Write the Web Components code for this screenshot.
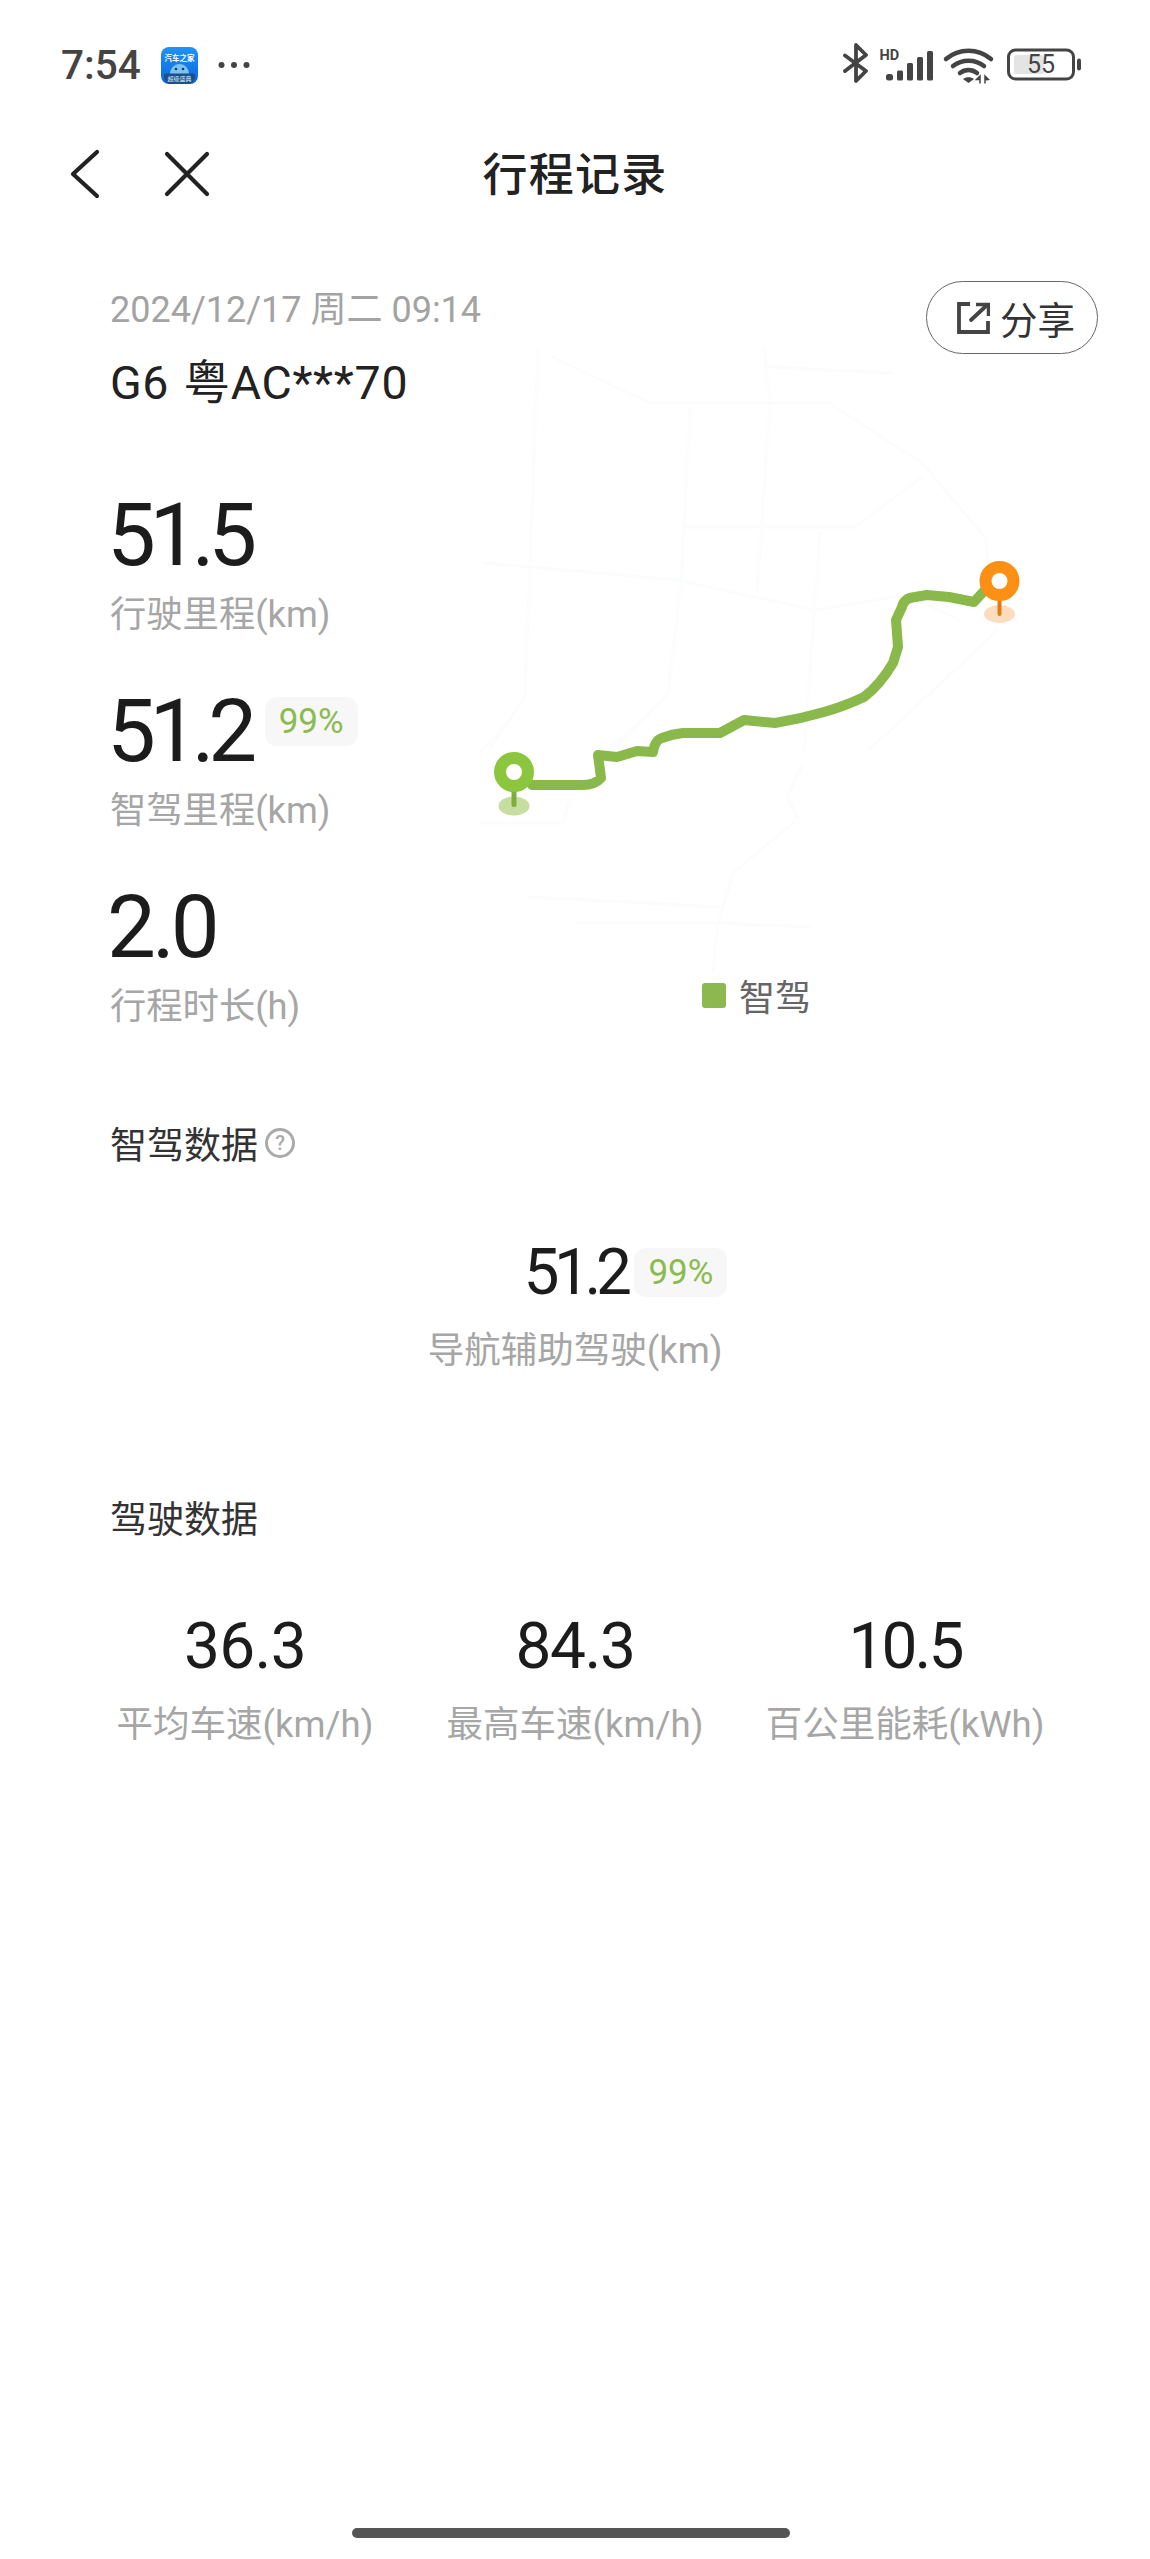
<!DOCTYPE html>
<html lang="zh">
<head>
<meta charset="utf-8">
<title>行程记录</title>
<style>
  html, body { margin: 0; background: #fff; }
  body {
    width: 1150px;
    min-height: 2559px;
    display: flex;
    flex-direction: column;
    font-family: Roboto, "Noto Sans CJK SC", sans-serif;
  }
</style>
</head>
<body>
  <status-bar></status-bar>
  <nav-bar>行程记录</nav-bar>
  <trip-summary>
    <span slot="date">2024/12/17 周二 09:14</span>
    <span slot="car">G6 粤AC***70</span>
    <stat-block label="行驶里程(km)">51.5</stat-block>
    <stat-block label="智驾里程(km)">51.2<percent-badge slot="badge">99%</percent-badge></stat-block>
    <stat-block label="行程时长(h)" style="--value-spacing:-4px">2.0</stat-block>
  </trip-summary>

  <section-title help>智驾数据</section-title>
  <metric-grid columns="1">
    <metric-cell label="导航辅助驾驶(km)" style="--value-spacing:-5.500px">51.2<percent-badge slot="badge">99%</percent-badge></metric-cell>
  </metric-grid>

  <section-title class="driving">驾驶数据</section-title>
  <metric-grid columns="3">
    <metric-cell label="平均车速(km/h)" style="--value-spacing:-.7px">36.3</metric-cell>
    <metric-cell label="最高车速(km/h)" style="--value-spacing:-1.500px">84.3</metric-cell>
    <metric-cell label="百公里能耗(kWh)" style="--value-spacing:-3px">10.5</metric-cell>
  </metric-grid>

  <home-indicator></home-indicator>

<script>
class StatusBar extends HTMLElement {
  constructor() {
    super();
    this.attachShadow({ mode: 'open' });
  }

  connectedCallback() {
    this.shadowRoot.innerHTML = `
      <style>
        :host {
          display: flex;
          align-items: center;
          height: 130px;
          box-sizing: border-box;
          padding: 0 69px 0 61px;
          color: #444;
        }
        .time {
          font: 500 40.500px/1 Roboto, sans-serif;
        }
        .app { margin-left: 20px; display: block; }
        .more { margin-left: 20px; display: block; }
        .right {
          margin-left: auto;
          display: flex;
          align-items: center;
        }
        svg { display: block; }
        text { font-family: Roboto, "Noto Sans CJK SC", sans-serif; }
      </style>
      <span class="time">7:54</span>
      <svg class="app" width="37" height="37" viewBox="0 0 37 37">
        <defs>
          <linearGradient id="appbg" x1="0" y1="0" x2="0" y2="1">
            <stop offset="0" stop-color="#1f93f5"/>
            <stop offset="1" stop-color="#0c66dc"/>
          </linearGradient>
        </defs>
        <rect width="37" height="37" rx="8" fill="url(#appbg)"/>
        <text x="18.5" y="14" text-anchor="middle" font-size="7.5" font-weight="700" fill="#fff">汽车之家</text>
        <path d="M9 28c0-7 4-11 9.500-11s9.500 4 9.500 11z" fill="#7cc3f2"/>
        <circle cx="15" cy="22" r="1.300" fill="#123d78"/>
        <circle cx="22" cy="22" r="1.300" fill="#123d78"/>
        <path d="M3 28.500c0-1 1-2 2-2h27c1 0 2 1 2 2v.5c0 4.500-3 8-8 8H11c-5 0-8-3.500-8-8z" fill="#1d4f86"/>
        <text x="18.500" y="33.500" text-anchor="middle" font-size="6" fill="#cfe6fa">超级盛典</text>
      </svg>
      <svg class="more" width="32" height="8" viewBox="0 0 32 8" fill="#444">
        <circle cx="3.500" cy="4" r="3"/><circle cx="16" cy="4" r="3"/><circle cx="28.500" cy="4" r="3"/>
      </svg>
      <div class="right">
        <svg width="238" height="46" viewBox="0 0 238 46">
          <!-- bluetooth -->
          <path d="M2 13.500 23 29 13 39V3l10 10L2 29" fill="none" stroke="#444" stroke-width="3.800" stroke-linejoin="round" stroke-linecap="round"/>
          <!-- HD + signal -->
          <text x="36.500" y="18" font-size="14.500" font-weight="700" fill="#444">HD</text>
          <g fill="#444">
            <rect x="43" y="32" width="7" height="6.500" rx="2.500"/>
            <rect x="54" y="28.500" width="6" height="10" rx="1.500"/>
            <rect x="64" y="21" width="6" height="17.500" rx="1.500"/>
            <rect x="74" y="15" width="6" height="23.500" rx="1.500"/>
            <rect x="84" y="9" width="6" height="29.500" rx="1.500"/>
          </g>
          <!-- wifi -->
          <g fill="none" stroke="#444" stroke-width="4.500" stroke-linecap="round">
            <path d="M103 17c13-11 32-11 45 0"/>
            <path d="M110 24c9-7 22-7 31 0"/>
            <path d="M117 31c5-4 12-4 17 0"/>
          </g>
          <path d="M120 37c3-2.500 8-2.500 11 0l-5.500 4z" fill="#444"/>
          <path d="M137 34l-3.500 3.500H137zM137 38v3.500M142 41.500V38M142 38V34l3.500 3.500z" fill="#444" stroke="#444" stroke-width="1.500"/>
          <!-- battery -->
          <rect x="165.500" y="8" width="65" height="29" rx="7" fill="#fff" stroke="#444" stroke-width="3"/>
          <rect x="171" y="13" width="30" height="19" rx="2" fill="#e4e4e4"/>
          <rect x="234" y="16.500" width="4" height="12" rx="2" fill="#444"/>
          <text x="198" y="31" text-anchor="middle" font-size="25" fill="#444">55</text>
        </svg>
      </div>
    `;
  }
}

class NavBar extends HTMLElement {
  constructor() {
    super();
    this.attachShadow({ mode: 'open' });
  }

  connectedCallback() {
    this.shadowRoot.innerHTML = `
      <style>
        :host {
          display: grid;
          grid-template-columns: 1fr auto 1fr;
          align-items: center;
          height: 88px;
          padding: 0 68px;
          box-sizing: border-box;
          color: #222;
        }
        .actions { display: flex; align-items: center; gap: 62px; }
        svg { display: block; }
        .title {
          font: 500 45px/1 "Noto Sans CJK SC", sans-serif;
          letter-spacing: 1.200px;
          margin-top: -5px;
        }
      </style>
      <div class="actions">
        <svg width="34" height="50" viewBox="0 0 34 50" fill="none" stroke="#222" stroke-width="4.200" stroke-linecap="round" stroke-linejoin="round">
          <path d="M29 3 5 25l24 22"/>
        </svg>
        <svg width="46" height="46" viewBox="0 0 46 46" fill="none" stroke="#222" stroke-width="4.200" stroke-linecap="round">
          <path d="M3 3l40 40M43 3 3 43"/>
        </svg>
      </div>
      <div class="title"><slot></slot></div>
      <div></div>
    `;
  }
}

class PercentBadge extends HTMLElement {
  constructor() {
    super();
    this.attachShadow({ mode: 'open' });
  }

  connectedCallback() {
    this.shadowRoot.innerHTML = `
      <style>
        :host {
          display: inline-flex;
          align-items: center;
          height: 49px;
          padding: 0 14px;
          border-radius: 12px;
          background: #f6f7f6;
          color: #8bbb50;
          font: 400 35px/1 Roboto, sans-serif;
          letter-spacing: 0;
        }
      </style>
      <slot></slot>
    `;
  }
}

class StatBlock extends HTMLElement {
  constructor() {
    super();
    this.attachShadow({ mode: 'open' });
  }

  connectedCallback() {
    const label = this.getAttribute('label') || '';
    this.shadowRoot.innerHTML = `
      <style>
        :host { display: block; }
        .row { display: flex; align-items: center; height: 100px; margin-left: -3px; }
        .value {
          font: 400 87px/100px Roboto, sans-serif;
          letter-spacing: var(--value-spacing, -6.500px);
          color: #1c1c1c;
          margin-top: -2px;
        }
        ::slotted([slot="badge"]) { margin: -22px 0 0 14px; }
        .label {
          font: 400 36.300px/58px Roboto, "Noto Sans CJK SC", sans-serif;
          color: #a6a6a6;
          white-space: nowrap;
        }
      </style>
      <div class="row">
        <span class="value"><slot></slot></span>
        <slot name="badge"></slot>
      </div>
      <div class="label">${label}</div>
    `;
  }
}

class TripMap extends HTMLElement {
  constructor() {
    super();
    this.attachShadow({ mode: 'open' });
  }

  connectedCallback() {
    this.shadowRoot.innerHTML = `
      <style>
        :host { display: block; }
        svg { display: block; overflow: visible; }
      </style>
      <svg width="614" height="600" viewBox="484 354 614 600">
        <g fill="none" stroke="#fbfcfc" stroke-width="3" stroke-linejoin="round" stroke-linecap="round">
          <path d="M538 350 525 697 489 750"/>
          <path d="M552 357 650 403H829L922 463 985 537 989 567"/>
          <path d="M690 410 681 583 668 693 614 750"/>
          <path d="M764 347 770 403 757 593"/>
          <path d="M770 367 891 373"/>
          <path d="M922 477 855 527H686"/>
          <path d="M485 563 677 580 815 610 905 595 960 620"/>
          <path d="M820 533 804 750"/>
          <path d="M998 630 869 750"/>
          <path d="M793 823 733 873 717 927 713 973"/>
          <path d="M577 923H717L810 927"/>
          <path d="M480 823H563L570 800"/>
          <path d="M530 897 720 907"/>
          <path d="M643 720 603 753"/>
          <path d="M510 720 480 753"/>
          <path d="M803 763 787 797 797 817"/>
        </g>
        <path d="M532 785H582Q595 785 601 778L598 755 617 757 637 751 653 752Q655 740 662 738 672 734 683 733H720L744 720 775 723Q800 719 824 712 845 706 864 697 880 685 893 663L898 647 896 620 902 607Q904 598 915 597L927 595 949 597 974 602 984 591" fill="none" stroke="#8ab84a" stroke-width="10" stroke-linejoin="round" stroke-linecap="round"/>
        <!-- start pin -->
        <ellipse cx="514" cy="806" rx="15.500" ry="9.500" fill="#c6dea0"/>
        <rect x="511.500" y="785" width="5" height="22" rx="2" fill="#7cae3a"/>
        <circle cx="514" cy="772" r="14" fill="#fff" stroke="#8cc63f" stroke-width="12"/>
        <!-- end pin -->
        <ellipse cx="999.500" cy="614" rx="15.500" ry="9" fill="#fbdcbd"/>
        <rect x="997.500" y="596" width="4" height="20" rx="2" fill="#e07c14"/>
        <circle cx="999.500" cy="581" r="14" fill="#fff" stroke="#fb9014" stroke-width="12"/>
      </svg>
    `;
  }
}

class TripSummary extends HTMLElement {
  constructor() {
    super();
    this.attachShadow({ mode: 'open' });
  }

  connectedCallback() {
    this.shadowRoot.innerHTML = `
      <style>
        :host {
          display: grid;
          grid-template-columns: 374px 1fr;
          padding: 67px 52px 0 110px;
        }
        .date {
          font: 400 36px/50px Roboto, "Noto Sans CJK SC", sans-serif;
          color: #a3a3a3;
          white-space: nowrap;
        }
        .car {
          margin-top: 23px;
          font: 400 46.500px/50px Roboto, "Noto Sans CJK SC", sans-serif;
          letter-spacing: .7px;
          word-spacing: 2px;
          color: #222;
          white-space: nowrap;
        }
        .stats {
          margin-top: 78px;
          display: flex;
          flex-direction: column;
          gap: 38px;
        }
        .side {
          display: flex;
          flex-direction: column;
          margin-top: -4px;
        }
        .share {
          align-self: flex-end;
          display: flex;
          align-items: center;
          gap: 10px;
          width: 172px;
          height: 73px;
          padding-left: 30px;
          box-sizing: border-box;
          border: 1.500px solid #666;
          border-radius: 37px;
          font: 400 37.500px/1 "Noto Sans CJK SC", sans-serif;
          color: #333;
        }
        .share svg { display: block; flex: none; }
        .share span { white-space: nowrap; }
        .legend {
          display: flex;
          align-items: center;
          gap: 13px;
          margin: 16px 0 0 218px;
          font: 400 36px/50px "Noto Sans CJK SC", sans-serif;
          color: #666;
        }
        .legend i {
          width: 24px;
          height: 25px;
          border-radius: 3px;
          background: #8cb850;
        }
      </style>
      <div>
        <div class="date"><slot name="date"></slot></div>
        <div class="car"><slot name="car"></slot></div>
        <div class="stats"><slot></slot></div>
      </div>
      <div class="side">
        <div class="share">
          <svg width="33" height="32" viewBox="0 0 33 32" fill="none" stroke="#444" stroke-width="3.800">
            <path d="M13 2H2v28h29V19"/>
            <path d="M14 18 29 4" stroke-linecap="round"/>
            <path d="M19 2.500h12.500V14" stroke-width="3.500"/>
          </svg>
          <span>分享</span>
        </div>
        <trip-map></trip-map>
        <div class="legend"><i></i><span>智驾</span></div>
      </div>
    `;
  }
}

class SectionTitle extends HTMLElement {
  constructor() {
    super();
    this.attachShadow({ mode: 'open' });
  }

  connectedCallback() {
    const help = this.hasAttribute('help');
    this.shadowRoot.innerHTML = `
      <style>
        :host {
          display: flex;
          align-items: center;
          gap: 7px;
          padding-left: 110px;
          margin-top: 82px;
          font: 400 37px/50px "Noto Sans CJK SC", sans-serif;
          color: #333;
        }
        :host(.driving) { margin-top: 113px; }
        .help {
          width: 30px;
          height: 30px;
          box-sizing: border-box;
          border: 3px solid #aaa;
          border-radius: 50%;
          display: flex;
          align-items: center;
          justify-content: center;
          font: 500 20px/1 Roboto, sans-serif;
          color: #aaa;
        }
      </style>
      <slot></slot>
      ${help ? '<span class="help">?</span>' : ''}
    `;
  }
}

class MetricGrid extends HTMLElement {
  constructor() {
    super();
    this.attachShadow({ mode: 'open' });
  }

  connectedCallback() {
    const columns = this.getAttribute('columns') || 3;
    this.shadowRoot.innerHTML = `
      <style>
        :host {
          display: grid;
          grid-template-columns: repeat(${columns}, 330px);
          justify-content: center;
          margin-top: 55px;
        }
      </style>
      <slot></slot>
    `;
  }
}

class MetricCell extends HTMLElement {
  constructor() {
    super();
    this.attachShadow({ mode: 'open' });
  }

  connectedCallback() {
    const label = this.getAttribute('label') || '';
    this.shadowRoot.innerHTML = `
      <style>
        :host {
          display: flex;
          flex-direction: column;
          align-items: center;
        }
        .value {
          position: relative;
          font: 400 64px/100px Roboto, sans-serif;
          letter-spacing: var(--value-spacing, -2px);
          color: #1c1c1c;
        }
        ::slotted([slot="badge"]) {
          position: absolute;
          left: 100%;
          top: 25px;
          margin-left: 8px;
        }
        .label {
          font: 400 36.500px/56px Roboto, "Noto Sans CJK SC", sans-serif;
          color: #a6a6a6;
          white-space: nowrap;
        }
      </style>
      <div class="value"><slot></slot><slot name="badge"></slot></div>
      <div class="label">${label}</div>
    `;
  }
}

class HomeIndicator extends HTMLElement {
  constructor() {
    super();
    this.attachShadow({ mode: 'open' });
  }

  connectedCallback() {
    this.shadowRoot.innerHTML = `
      <style>
        :host {
          display: flex;
          justify-content: center;
          margin-top: auto;
          padding: 0 8px 21px 0;
        }
        div {
          width: 438px;
          height: 10px;
          border-radius: 5px;
          background: #555;
        }
      </style>
      <div></div>
    `;
  }
}

customElements.define('status-bar', StatusBar);
customElements.define('nav-bar', NavBar);
customElements.define('percent-badge', PercentBadge);
customElements.define('stat-block', StatBlock);
customElements.define('trip-map', TripMap);
customElements.define('trip-summary', TripSummary);
customElements.define('section-title', SectionTitle);
customElements.define('metric-grid', MetricGrid);
customElements.define('metric-cell', MetricCell);
customElements.define('home-indicator', HomeIndicator);
</script>
</body>
</html>
